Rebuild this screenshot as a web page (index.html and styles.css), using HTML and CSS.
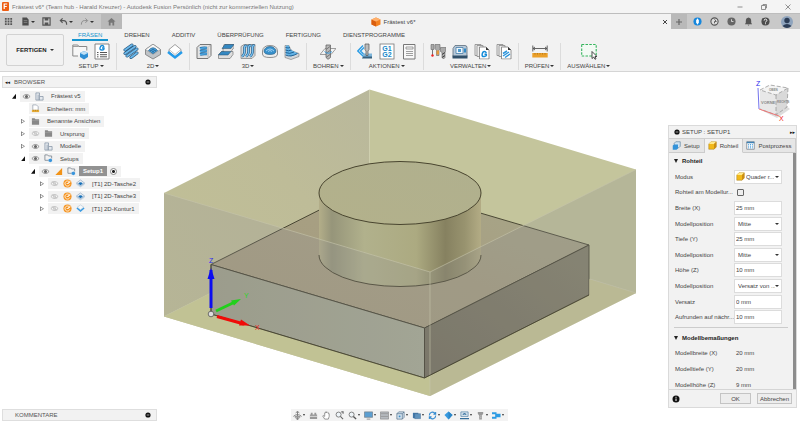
FILE: index.html
```html
<!DOCTYPE html>
<html lang="de">
<head>
    <meta charset="UTF-8">
    <meta name="viewport" content="width=device-width, initial-scale=1.0">
    <title>Frästest v6* - Autodesk Fusion</title>
    <link rel="stylesheet" href="styles.css">
</head>
<body>
    <!-- Shared icons -->
    <svg class="sprite" aria-hidden="true">
        <symbol id="eye" viewBox="0 0 10 8"><path d="M1 4Q5 -.5 9 4Q5 8.500 1 4Z" fill="#fff" stroke="#777" stroke-width=".9"/><circle cx="5" cy="4" r="1.700" fill="#666"/></symbol>
        <symbol id="eye-off" viewBox="0 0 10 8"><path d="M1 4Q5 -.5 9 4Q5 8.500 1 4Z" fill="#fff" stroke="#aaa" stroke-width=".8"/><circle cx="5" cy="4" r="1.300" fill="none" stroke="#aaa" stroke-width=".7"/><path d="M2 2l6 4" stroke="#aaa" stroke-width=".6"/></symbol>
        <symbol id="component" viewBox="0 0 10 10"><path d="M1 1h4v4h4v4H1z" fill="#e5e9ee" stroke="#8291a3" stroke-width=".8"/><path d="M3.500 3v6M5 5v4" stroke="#8291a3" stroke-width=".8"/></symbol>
        <symbol id="folder" viewBox="0 0 10 10"><path d="M1 1.500h3l1 1h4v6H1z" fill="#888"/><path d="M1 3.800h8" stroke="#aaa" stroke-width=".5"/></symbol>
        <symbol id="units" viewBox="0 0 10 10"><path d="M2 1h4l2 2v4H2z" fill="#fff" stroke="#8793a2" stroke-width=".7"/><path d="M1 6.500h8V9H1z" fill="#e8ad37"/><path d="M3 6.500V8M5 6.500V8M7 6.500V8" stroke="#8c6416" stroke-width=".5"/></symbol>
        <symbol id="setup-small" viewBox="0 0 10 10"><path d="M1 1h3l1 1.200h3.500V5M1 1v6h4" fill="none" stroke="#7b8490" stroke-width=".9"/><path d="M5 6l2-1 2 1v2L7 9.300 5 8z" fill="#3995dc"/></symbol>
        <symbol id="triangle" viewBox="0 0 10 10"><path d="M9 1v8H1.500z" fill="#f29317"/></symbol>
        <symbol id="cycle" viewBox="0 0 10 10"><circle cx="5" cy="5" r="4.500" fill="#f5931e"/><path d="M7.300 3.500A2.800 2.800 0 1 0 7.600 6M7.700 1.800v2H5.500M4 5h2.500" fill="none" stroke="#fff" stroke-width=".9"/></symbol>
        <symbol id="pocket-small" viewBox="0 0 10 10"><path d="M5 1l4.500 3.500v2L5 9.500.5 6.500v-2z" fill="#c9d8e5"/><path d="M5 1l4.500 3.500L5 7.500.5 4.500z" fill="#e9edf1" stroke="#6a8db0" stroke-width=".5"/><path d="M2.500 5Q5 2 7.500 5L5 7z" fill="#1770b8"/></symbol>
        <symbol id="contour-small" viewBox="0 0 10 10"><path d="M.5 5L5 9l4.500-4-1-1.500L5 6.500 1.500 3.500z" fill="#3a9be3"/><path d="M5 1l3.500 2.500L5 6.300 1.500 3.500z" fill="#f6f9fb" stroke="#9db6cc" stroke-width=".5"/></symbol>
        <symbol id="dot" viewBox="0 0 6 6"><circle cx="3" cy="3" r="2.600" fill="#111"/><path d="M1.700 3h2.600" stroke="#fff" stroke-width=".6"/></symbol>
        <symbol id="cube-yellow" viewBox="0 0 12 12"><path d="M1 4l3-3h7v7l-3 3H1z" fill="#f2b919" stroke="#9c7419" stroke-width=".6"/><path d="M1 4l3-3h7L8 4z" fill="#ffe98d"/><path d="M8 4l3-3v7l-3 3z" fill="#c98d14"/></symbol>
        <symbol id="pages" viewBox="0 0 16 16"><path d="M1 1h6v11H1z" fill="#eee" stroke="#888" stroke-width=".8"/><path d="M3 2h6v11H3z" fill="#eee" stroke="#888" stroke-width=".8"/><path d="M5.500 3.500H12l3 3v9H5.500z" fill="#fff" stroke="#777" stroke-width=".8"/><path d="M12 3.500v3h3z" fill="#333"/></symbol>
    </svg>

    <header class="title-bar">
        <svg class="logo" viewBox="0 0 8 10"><rect width="7" height="9" rx="1" fill="#ed5d13"/><path d="M2.200 7V2h3M2.200 4.500h2.600" fill="none" stroke="#fff" stroke-width="1.200"/></svg>
        <span class="window-title">Frästest v6* (Team hub - Harald Kreuzer) - Autodesk Fusion Persönlich (nicht zur kommerziellen Nutzung)</span>
        <div class="window-controls">
            <button aria-label="Minimieren"><svg viewBox="0 0 8 8"><path d="M1.500 4h5"/></svg></button>
            <button aria-label="Verkleinern"><svg viewBox="0 0 8 8"><path d="M1.500 2.500h4v4h-4zM3 2.500v-1h3.500V5h-1"/></svg></button>
            <button aria-label="Schließen"><svg viewBox="0 0 8 8"><path d="M1.500 1.500l5 5M6.500 1.500l-5 5"/></svg></button>
        </div>
    </header>

    <div class="tab-bar">
        <div class="quick-access">
            <button aria-label="Datengruppe"><svg viewBox="0 0 10 10"><path d="M1 1h2v2H1zM4 1h2v2H4zM7 1h2v2H7zM1 4h2v2H1zM4 4h2v2H4zM7 4h2v2H7zM1 7h2v2H1zM4 7h2v2H4zM7 7h2v2H7z" fill="#555"/></svg></button>
            <button class="caret" aria-label="Datei"><svg viewBox="0 0 10 10"><path d="M1.500 .5h5L8.500 3v6.500h-7z" fill="#4d4d4d"/><path d="M3 4h4M3 6h4" stroke="#aaa" stroke-width=".6"/></svg></button>
            <button aria-label="Speichern"><svg viewBox="0 0 10 10"><path d="M1 1h8v8H1z" fill="none" stroke="#555" stroke-width="1.300"/><path d="M3 1h4v3H3zM3 6h4v3H3z" fill="#555"/></svg></button>
            <button class="caret" aria-label="Rückgängig"><svg viewBox="0 0 10 10"><path d="M4 1.500L1.500 4 4 6.500M2 4h3q3.500 0 3.500 4.500" fill="none" stroke="#555" stroke-width="1.300"/></svg></button>
            <button class="caret muted" aria-label="Wiederherstellen"><svg viewBox="0 0 10 10"><path d="M6 1.500L8.500 4 6 6.500M8 4H5Q1.500 4 1.500 8.500" fill="none" stroke="#888" stroke-width="1"/></svg></button>
        </div>
        <button class="home" aria-label="Start"><svg viewBox="0 0 10 10"><path d="M5 1l4.500 4H8v4.500H6V6.500H4v3H2V5H.5z" fill="#777"/></svg></button>
        <div class="document-tab">
            <svg class="doc-icon" viewBox="0 0 10 10"><path d="M5 .5l4.500 2v5L5 9.500.5 7.500v-5z" fill="#f58220"/><path d="M.5 2.500L5 4.500v5l-4.500-2z" fill="#d95e0f"/><path d="M5 .5l4.500 2L5 4.500.5 2.500z" fill="#ffb06c"/></svg>
            <span>Frästest v6*</span>
            <button class="close-tab" aria-label="Tab schließen"><svg viewBox="0 0 8 8"><path d="M2 2l4 4M6 2L2 6" stroke="#333" stroke-width=".9"/></svg></button>
        </div>
        <button class="new-tab" aria-label="Neuer Tab"><svg viewBox="0 0 10 10"><path d="M5 2v6M2 5h6" stroke="#666" stroke-width="1.200"/></svg></button>
        <div class="account">
            <button aria-label="Erweiterungen"><svg viewBox="0 0 10 10"><circle cx="5" cy="5" r="4.500" fill="#1687dd"/><path d="M5 1.500l1.500 2v2.500L5 8.500 3.500 6V3.500z" fill="#fff"/></svg></button>
            <button aria-label="Offline"><svg viewBox="0 0 10 10"><circle cx="5" cy="5" r="4" fill="#ddd" stroke="#555" stroke-width="1.200"/><path d="M5 2.500L7 5H5v2" fill="none" stroke="#555" stroke-width="1"/></svg></button>
            <button aria-label="Auftragsstatus"><svg viewBox="0 0 10 10"><circle cx="5" cy="5" r="4.500" fill="#666"/><path d="M5 2.500V5h2.200" fill="none" stroke="#ddd" stroke-width="1"/></svg></button>
            <button aria-label="Benachrichtigungen"><svg viewBox="0 0 10 10"><path d="M5 .5q3 .5 3 4v2L9 8H1l1-1.500v-2q0-3.500 3-4zM4 8.500h2L5 9.700z" fill="#555"/></svg></button>
            <button aria-label="Hilfe"><svg viewBox="0 0 10 10"><circle cx="5" cy="5" r="4.500" fill="#4d4d4d"/><path d="M3.500 4q0-1.700 1.500-1.700T6.500 4Q6.500 4.800 5 5.500v.6M5 7v1" fill="none" stroke="#fff" stroke-width="1"/></svg></button>
            <button class="avatar" aria-label="Konto"><svg viewBox="0 0 12 12"><circle cx="6" cy="6" r="6" fill="#8fa4bd"/><circle cx="6" cy="4.500" r="2.700" fill="#2c3d56"/><path d="M1.500 10Q6 6 10.500 10Q6 14 1.500 10Z" fill="#2c3d56"/></svg></button>
        </div>
    </div>

    <nav class="ribbon">
        <button class="workspace">FERTIGEN <span class="arrow"></span></button>
        <div class="ribbon-main">
            <div class="ribbon-tabs">
                <a class="active" href="#">FRÄSEN</a>
                <a href="#">DREHEN</a>
                <a href="#">ADDITIV</a>
                <a href="#">ÜBERPRÜFUNG</a>
                <a href="#">FERTIGUNG</a>
                <a href="#">DIENSTPROGRAMME</a>
            </div>
            <div class="ribbon-groups">
                <div class="group">
                    <div class="tools">
                        <button aria-label="Neues Setup"><svg viewBox="0 0 16 16"><path d="M6 12.500H.8V1.500h5l1 1.500h8V7" fill="#f7f7f7" stroke="#888" stroke-width="1"/><path d="M1 3h5.500" stroke="#888" stroke-width=".8"/><path d="M8 9.500l4-2 4 2v4l-4 2.500-4-2.500z" fill="#2e8ed4"/><path d="M8 9.500l4-2 4 2-4 2z" fill="#bfe0f6"/></svg></button>
                        <button aria-label="NC-Programm"><svg viewBox="0 0 16 16"><path d="M1 .5h14v15H1z" fill="#fff" stroke="#777" stroke-width=".9"/><path d="M10 3.500Q9.500 2 8 2T6 4.300 8 6.500t2-2H8" fill="none" stroke="#148bd8" stroke-width="1.300"/><path d="M3 9h1.500M3 11.200h1.500M3 13.300h1.500M6 9h7M6 11.200h7M6 13.300h7" stroke="#555" stroke-width="1"/></svg></button>
                    </div>
                    <button class="group-label">SETUP</button>
                </div>
                <div class="group">
                    <div class="tools">
                        <button aria-label="2D adaptiv"><svg viewBox="0 0 16 16"><g stroke-linecap="round"><path d="M2 6.500l7-5M2 10l10-7M4 12.500l10-7M8 14l6-4.500" stroke="#29577c" stroke-width="3"/><path d="M2 6.500l7-5M2 10l10-7M4 12.500l10-7M8 14l6-4.500" stroke="#6bb9ec" stroke-width="1.700"/></g></svg></button>
                        <button aria-label="2D-Tasche"><svg viewBox="0 0 16 16"><path d="M8 .7L15.500 6v5L8 15.500.5 11V6z" fill="#bfc3c7" stroke="#777" stroke-width=".8"/><path d="M8 .7L15.500 6 8 11 .5 6z" fill="#f6f6f6" stroke="#888" stroke-width=".6"/><path d="M3.500 7Q8 1.500 12.500 7L8 10.200z" fill="#49a3de" stroke="#195a8a" stroke-width=".7"/><path d="M5 7.500q3-3 6 0M7 8.500q1-1 2 0" fill="none" stroke="#164d7c" stroke-width=".7"/></svg></button>
                        <button aria-label="2D-Kontur"><svg viewBox="0 0 16 16"><path d="M8 1l6 5v2l-6 5-6-5V6z" fill="#fff" stroke="#888" stroke-width=".8"/><path d="M1 8.500l7 5.500 7-5.500" fill="none" stroke="#249bea" stroke-width="2.400"/><path d="M2 6l6 5 6-5" fill="none" stroke="#999" stroke-width=".6"/></svg></button>
                    </div>
                    <button class="group-label">2D</button>
                </div>
                <div class="group">
                    <div class="tools">
                        <button aria-label="Adaptives Schruppen"><svg viewBox="0 0 16 16"><path d="M1 4l3-3h11v11l-3 3H1z" fill="#e3e3e3" stroke="#777"/><path d="M12 4v10M12 4l3-3" stroke="#999" stroke-width=".6"/><path d="M4 5q3-1 7-.5M4 8q3-1 7-.5M4 11q3-1 7-.5" fill="none" stroke="#206ca5" stroke-width="2.600"/><path d="M4 5q3-1 7-.5M4 8q3-1 7-.5M4 11q3-1 7-.5" fill="none" stroke="#58b4ee" stroke-width="1.200"/></svg></button>
                        <button aria-label="Taschenräumen"><svg viewBox="0 0 16 16"><path d="M6 1h10v3l-3 4h2v3l-3 4H.5v-4l3-3H6l-1-1V5z" fill="#dedede" stroke="#777" stroke-width=".7"/><path d="M7 1h9l-3 4H4zM3.500 8H13l-3 3.500H.5z" fill="#3488c2" stroke="#264f6d" stroke-width=".5"/></svg></button>
                        <button aria-label="Parallel"><svg viewBox="0 0 16 16"><path d="M1 3l3-2h11v11l-3 3H1z" fill="#d8d8d8" stroke="#888" stroke-width=".8"/><path d="M2 13Q5 11 4.500 6T7 3M6 13Q9 11 8.500 6T11 2.500M10 13q3-2 2.500-7T14.500 2.500" fill="none" stroke="#24618f" stroke-width="2.600"/><path d="M2 13Q5 11 4.500 6T7 3M6 13Q9 11 8.500 6T11 2.500M10 13q3-2 2.500-7T14.500 2.500" fill="none" stroke="#7dc5f4" stroke-width="1.200"/></svg></button>
                        <button aria-label="Kontur 3D"><svg viewBox="0 0 16 16"><path d="M.5 7.500Q1 2 8 2t7.500 5.500v3q0 3.500-7.500 3.500T.5 10.500z" fill="#eee" stroke="#777" stroke-width=".8"/><path d="M2 7.500Q3 3 8 3t6 4.500Q14 11 8 11T2 7.500z" fill="#3790cb" stroke="#245b82" stroke-width=".6"/><path d="M4 7.500q4-4 8 0M6 8q2-2 4 0" fill="none" stroke="#a6d6f6" stroke-width=".9"/></svg></button>
                        <button aria-label="Rampe"><svg viewBox="0 0 16 16"><path d="M1 12V2h4l2 5 8 3v3l-8 3-6-2z" fill="#d2d6da" stroke="#777" stroke-width=".6"/><path d="M2 2h3l1 4 8 4-7 3-5-2z" fill="#62b3e6"/><path d="M1.500 4q3 1 4.500 0M1.500 6.500q3 1.500 6 0M1.500 9q4 2 8.500-.5M1.500 11.500q5 2.500 12-1.500" fill="none" stroke="#226396" stroke-width="1"/></svg></button>
                    </div>
                    <button class="group-label">3D</button>
                </div>
                <div class="group">
                    <div class="tools">
                        <button aria-label="Bohren"><svg viewBox="0 0 16 16"><path d="M0 11l5-6h11l-5 6z" fill="#f4f4f4" stroke="#888" stroke-width=".8"/><path d="M6 1.500h4.500V14L8 15.800 6 14z" fill="#b9b9b9" stroke="#666" stroke-width=".8"/><path d="M6 6l4-3M6 10l4-3M6 14l4-3" stroke="#777"/><path d="M4.500 8q3.500 3.500 7.500 0" fill="none" stroke="#339adf" stroke-width=".9"/></svg></button>
                    </div>
                    <button class="group-label">BOHREN</button>
                </div>
                <div class="group">
                    <div class="tools">
                        <button aria-label="Simulieren"><svg viewBox="0 0 16 16"><path d="M6 2L.8 7.500 7 13.500M7 4L3.500 7.500 7 11" fill="none" stroke="#2c9de5" stroke-width="1.400"/><path d="M7 11h8v4H5z" fill="#35607f"/><path d="M6 10h9v3H6z" fill="#7db5da"/><path d="M8 .5h4V6l-1 1.500v4.500H9V7.500L8 6z" fill="#bcbcbc" stroke="#555" stroke-width=".7"/></svg></button>
                        <button aria-label="Postprozess"><svg viewBox="0 0 16 16"><rect x="1" y=".5" width="14" height="15" fill="#fff" stroke="#777" stroke-width=".8"/><text x="8" y="7" class="code">G1</text><text x="8" y="13.500" class="code">G2</text></svg></button>
                        <button aria-label="Einrichtungsblatt"><svg viewBox="0 0 16 16"><path d="M2.500 1h11.500v14.500H2.500z" fill="#f8f8f8" stroke="#777"/><path d="M5 3.500h7v2H5zM5 8h7M5 10h7M5 12h7" fill="none" stroke="#888" stroke-width=".8"/></svg></button>
                    </div>
                    <button class="group-label">AKTIONEN</button>
                </div>
                <div class="group">
                    <div class="tools">
                        <button aria-label="Werkzeugbibliothek"><svg viewBox="0 0 16 16"><path d="M1 1h3v5H1zM5 1h5v4l-1 2v5H6.500V7L5 5zM10.500 4H16v4l-1 1v5l-1.500 1.500L12 14V9l-1.500-1z" fill="#aaa" stroke="#666" stroke-width=".6"/><path d="M2.500 6v6" stroke="#777"/><circle cx="2.500" cy="12" r="1.200" fill="#e22"/><path d="M6.500 7H9v4H6.500z" fill="#e4993d"/><path d="M12 11l3-2M12 14l3-2" stroke="#444"/></svg></button>
                        <button aria-label="Maschinenbibliothek"><svg viewBox="0 0 16 16"><path d="M1 13V5l2-3h10q2 0 2 2v9z" fill="#b7c9d9" stroke="#5c6d7c" stroke-width=".8"/><path d="M.5 12h15v3H.5z" fill="#31506a"/><path d="M4 4h7v6H4z" fill="#eef6fb" stroke="#477da8" stroke-width=".8"/><path d="M6 5.500h3v3H6z" fill="#4b9ad0"/><path d="M12 5h2v4h-2z" fill="#338bc7"/></svg></button>
                        <button aria-label="Postprozessorbibliothek"><svg viewBox="0 0 16 16"><use href="#pages"/><path d="M12.300 9.500Q11.800 8 10.300 8T8.200 10.700 10.300 13t2-2.200h-1.800" fill="none" stroke="#148bd8" stroke-width="1.500"/></svg></button>
                        <button aria-label="Vorlagenbibliothek"><svg viewBox="0 0 16 16"><use href="#pages"/><path d="M7 10l4-2.500M7 12.500l6-4M9 14l5-3.500" stroke="#2d95dc" stroke-width="1.500"/></svg></button>
                    </div>
                    <button class="group-label">VERWALTEN</button>
                </div>
                <div class="group">
                    <div class="tools">
                        <button aria-label="Messen"><svg viewBox="0 0 16 16"><path d="M.8 2v6M15.200 2v6M1 5h14M3 3.500L1 5l2 1.500M13 3.500L15 5l-2 1.500" fill="none" stroke="#555" stroke-width=".9"/><path d="M.3 9.500h15.400v4.500H.3z" fill="#eba02a"/><path d="M3 9.500v1.500M5.500 9.500v1.500M8 9.500v1.500M10.500 9.500v1.500M13 9.500v1.500" stroke="#9a6412" stroke-width=".6"/></svg></button>
                    </div>
                    <button class="group-label">PRÜFEN</button>
                </div>
                <div class="group">
                    <div class="tools">
                        <button aria-label="Auswählen"><svg viewBox="0 0 16 16"><rect x=".7" y="1" width="14.500" height="11.500" fill="#f3faf4" stroke="#35b55d" stroke-width="1.100" stroke-dasharray="2.500 1.300"/><path d="M11 8v7l1.800-1.500 1.200 2.300 1-.6-1-2.200h2z" fill="#fff" stroke="#222" stroke-width=".8"/></svg></button>
                    </div>
                    <button class="group-label">AUSWÄHLEN</button>
                </div>
            </div>
        </div>
    </nav>

    <main class="workspace-area">
        <!-- 3D scene: stock box, plate with cylinder, origin triad -->
        <svg class="scene" viewBox="0 72 800 353" role="img" aria-label="Modell im Rohteil">
            <defs>
                <linearGradient id="backLeft" x1="0" y1="1" x2="1" y2="0"><stop offset="0" stop-color="#c1c096"/><stop offset=".6" stop-color="#bebc98"/><stop offset="1" stop-color="#b9b89c"/></linearGradient>
                <linearGradient id="plateTop" x1="0" y1="1" x2="1" y2="0"><stop offset="0" stop-color="#a59b7d"/><stop offset=".5" stop-color="#a79f82"/><stop offset="1" stop-color="#a7a78a"/></linearGradient>
                <linearGradient id="plateFront" x1="0" y1="0" x2="1" y2="0"><stop offset="0" stop-color="#9fa089"/><stop offset="1" stop-color="#a7ab95"/></linearGradient>
                <linearGradient id="plateSide" x1="0" y1="1" x2="1" y2="0"><stop offset="0" stop-color="#736e5c"/><stop offset="1" stop-color="#838069"/></linearGradient>
                <linearGradient id="cylinder" x1="0" y1="0" x2="1" y2="0"><stop offset="0" stop-color="#b3ae89"/><stop offset=".08" stop-color="#96957a"/><stop offset=".28" stop-color="#b1b18c"/><stop offset=".6" stop-color="#acaa81"/><stop offset=".78" stop-color="#868160"/><stop offset=".9" stop-color="#98936f"/><stop offset="1" stop-color="#b3ac85"/></linearGradient>
                <linearGradient id="cap" x1="0" y1="1" x2="1" y2="0"><stop offset="0" stop-color="#b3b18b"/><stop offset="1" stop-color="#b0b08e"/></linearGradient>
            </defs>
            <path d="M164 316.500L370 213l266 80-206 103z" fill="#c4c497"/>
            <path d="M164 193L369.500 89.500V213L164 316.500z" fill="url(#backLeft)"/>
            <path d="M369.500 89.500L636 169.500V293L369.500 213z" fill="#c4c59c"/>
            <path d="M369.500 90v123" stroke="#cfcfaf"/>
            <path d="M164 316.500l53-26.500M570 273l66 20" stroke="#cdcdac"/>
            <g stroke="#3e3c2a" stroke-width=".9" stroke-linejoin="round">
                <path d="M211 264.500L375 182l214 63-164.500 83z" fill="url(#plateTop)"/>
                <path d="M211 264.500L424.500 328v50L211 314z" fill="url(#plateFront)"/>
                <path d="M424.500 328L589 245v50l-164.500 83z" fill="url(#plateSide)"/>
            </g>
            <path d="M319 193v62a81 31.500 0 0 0 162 0v-62z" fill="url(#cylinder)"/>
            <path d="M319 255a81 31.500 0 0 0 162 0" fill="none" stroke="#49452f"/>
            <ellipse cx="400" cy="193" rx="81" ry="31.500" fill="url(#cap)" stroke="#49452f"/>
            <path d="M164 193l266 79v124l-266-79.500z" fill="#949496" fill-opacity=".24"/>
            <path d="M430 272l206-102.500V293L430 396z" fill="#8f8e90" fill-opacity=".28"/>
            <path d="M164 316.500l46-23.500v21l214.500 64 5.500-2.500V396z" fill="#c5c693" fill-opacity=".7"/>
            <path d="M430 375.500L589 295v-16l47 14-206 103z" fill="#bebd94" fill-opacity=".6"/>
            <path d="M164 193l266 79 206-102.500M430 272v124" fill="none" stroke="#c7c5ac" stroke-opacity=".6"/>
            <path d="M211 264.500V314l213.500 64L589 295" fill="none" stroke="#45422d" stroke-width=".8"/>
            <path d="M211 308v-38" stroke="#0c0cf0" stroke-width="3"/><path d="M211 268l-3.500 11h7z" fill="#0c0cf0"/>
            <path d="M216 311l20-9.500" stroke="#22d01c" stroke-width="3"/><path d="M241 299l-10 1.500 3 5z" fill="#22d01c"/>
            <path d="M217 316.500l27 7.500" stroke="#f00b08" stroke-width="3"/><path d="M250 325.500l-9-6-2 6z" fill="#f00b08"/>
            <circle cx="211" cy="314" r="2.800" fill="#ddd" stroke="#555" stroke-width=".8"/>
            <text x="209" y="263" class="axis axis-z">Z</text>
            <text x="244" y="298" class="axis axis-y">Y</text>
            <text x="255" y="330" class="axis axis-x">X</text>
        </svg>

        <section class="browser">
            <div class="panel-bar"><span class="collapse">◂◂</span><span>BROWSER</span><svg viewBox="0 0 6 6"><use href="#dot"/></svg></div>
            <ul class="tree">
                <li><i class="twist open"></i><div class="node"><svg><use href="#eye"/></svg><svg><use href="#component"/></svg><span>Frästest v5</span></div></li>
                <li class="level-1"><i class="twist none"></i><div class="node"><svg><use href="#units"/></svg><span>Einheiten: mm</span></div></li>
                <li class="level-1"><i class="twist"></i><div class="node"><svg><use href="#folder"/></svg><span>Benannte Ansichten</span></div></li>
                <li class="level-1"><i class="twist"></i><div class="node"><svg><use href="#eye-off"/></svg><svg><use href="#folder"/></svg><span>Ursprung</span></div></li>
                <li class="level-1"><i class="twist"></i><div class="node"><svg><use href="#eye"/></svg><svg><use href="#component"/></svg><span>Modelle</span></div></li>
                <li class="level-1"><i class="twist open"></i><div class="node"><svg><use href="#eye"/></svg><svg><use href="#setup-small"/></svg><span>Setups</span></div></li>
                <li class="level-2"><i class="twist open"></i><div class="node"><svg><use href="#eye"/></svg><svg><use href="#triangle"/></svg><svg><use href="#setup-small"/></svg><span class="selected">Setup1</span><input type="radio" checked aria-label="Setup1 aktiv"></div></li>
                <li class="level-3"><i class="twist"></i><div class="node"><svg><use href="#eye-off"/></svg><svg><use href="#cycle"/></svg><svg><use href="#pocket-small"/></svg><span>[T1] 2D-Tasche2</span></div></li>
                <li class="level-3"><i class="twist"></i><div class="node"><svg><use href="#eye-off"/></svg><svg><use href="#cycle"/></svg><svg><use href="#pocket-small"/></svg><span>[T1] 2D-Tasche3</span></div></li>
                <li class="level-3"><i class="twist"></i><div class="node"><svg><use href="#eye-off"/></svg><svg><use href="#cycle"/></svg><svg><use href="#contour-small"/></svg><span>[T1] 2D-Kontur1</span></div></li>
            </ul>
        </section>

        <div class="panel-bar comments"><span>KOMMENTARE</span><svg viewBox="0 0 6 6"><use href="#dot"/></svg></div>

        <div class="nav-bar">
            <button class="caret" aria-label="Orbit"><svg viewBox="0 0 10 10"><path d="M5 .5v9M.5 6q4.500-4 9 0M3 2l2-1.500L7 2M3 8l2 1.500L7 8" fill="none" stroke="#777"/><path d="M2 6.500h6" stroke="#999" stroke-width="2"/></svg></button>
            <button aria-label="Ansehen"><svg viewBox="0 0 10 10"><path d="M1 4h8v5H1zM2 2h2v2H2zM6 2h2v2H6z" fill="#999"/><path d="M1 6h8" stroke="#ddd"/></svg></button>
            <button aria-label="Pan"><svg viewBox="0 0 10 10"><path d="M3 9L.8 5.500l1-.5L3 6V2h1V1h1v1l1-1 1 1v1h1v3L7 9z" fill="#fff" stroke="#777" stroke-width=".8"/></svg></button>
            <button aria-label="Zoom"><svg viewBox="0 0 10 10"><circle cx="4" cy="4" r="2.800" fill="#eef4f8" stroke="#777"/><path d="M6 6l3 3M7 1h2v2" fill="none" stroke="#666" stroke-width="1.200"/></svg></button>
            <button class="caret" aria-label="Einpassen"><svg viewBox="0 0 10 10"><circle cx="4" cy="4" r="2.800" fill="#eef4f8" stroke="#777"/><path d="M6 6l3 3" stroke="#555" stroke-width="1.500"/></svg></button>
            <button class="caret" aria-label="Anzeige"><svg viewBox="0 0 10 10"><path d="M.5 1h9v6h-9z" fill="#5c9fd1" stroke="#76818c" stroke-width=".8"/><path d="M3 9h4" stroke="#888"/></svg></button>
            <button class="caret" aria-label="Raster"><svg viewBox="0 0 10 10"><path d="M.5 1h9v8h-9z" fill="#b7bbc0" stroke="#777" stroke-width=".6"/><path d="M1 3h8M1 6h8" stroke="#888" stroke-width=".7"/></svg></button>
            <button class="caret" aria-label="Darstellung"><svg viewBox="0 0 10 10"><path d="M1 3l2-2h6v6L7 9H1zM1 3h6v6M7 3l2-2" fill="#dce9f3" stroke="#54718c" stroke-width=".8"/><path d="M3 5h2v2H3z" fill="#3c8ac2"/></svg></button>
            <button class="caret" aria-label="Ansichten"><svg viewBox="0 0 10 10"><path d="M1 2h6v6H1z" fill="#3f76a8"/><path d="M3 3h6.500v5.500H3z" fill="#5f93bd" stroke="#446a8c" stroke-width=".5"/></svg></button>
            <button class="caret" aria-label="Aktualisieren"><svg viewBox="0 0 10 10"><path d="M1.500 5A3.500 3.500 0 0 1 8 3M8.500 5A3.500 3.500 0 0 1 2 7M8.500 1v2.500H6M1.500 9V6.500H4" fill="none" stroke="#348bd0" stroke-width="1.200"/></svg></button>
            <button class="caret" aria-label="Rohteil"><svg viewBox="0 0 10 10"><path d="M5 .5l4.500 4-4.500 5-4.500-5z" fill="#389ae0"/><path d="M5 .5v9l4.500-5z" fill="#2d86c6"/></svg></button>
            <button class="caret" aria-label="Maschine"><svg viewBox="0 0 10 10"><path d="M1 1h8v5H1z" fill="#dce8f1" stroke="#5281a4" stroke-width=".8"/><path d="M3 4l2-1 2 1M0 8.500h10" fill="none" stroke="#356f9c" stroke-width="1.300"/></svg></button>
            <button class="caret" aria-label="Werkzeug"><svg viewBox="0 0 10 10"><path d="M2 1h6v2L6.500 5v4.500h-3V5L2 3z" fill="#999"/><path d="M4 6l2-1M4 8l2-1" stroke="#ddd" stroke-width=".6"/></svg></button>
            <button class="caret" aria-label="Werkzeugweg"><svg viewBox="0 0 10 10"><path d="M0 1.500h5v1.500h4.500v4H5v1.500H0v-2h3.500v-3H0z" fill="#2c9be3"/></svg></button>
        </div>

        <svg class="view-cube" viewBox="0 0 44 44" role="img" aria-label="ViewCube">
            <path d="M8 31l16 8 13-9-5-4z" fill="#bbb" opacity=".5"/>
            <path d="M7 11l10-5 18 3-12 7z" fill="#f4f4f4"/><path d="M7 11l16 5v20L7 30z" fill="#e8e8e8"/><path d="M23 16l12-7-1 19-11 8z" fill="#d9d9d9"/>
            <path d="M7 11l10-5 18 3-12 7zM23 16v20M35 9l-1 19-11 8-16-6" fill="none" stroke="#999" stroke-width=".8" stroke-dasharray="4 2"/>
            <path d="M6 30L5 9" stroke="#7474ed"/><path d="M6 30l20 7" stroke="#ef7777"/>
            <text x="8" y="25" class="cube-text">VORNE</text>
            <text x="24" y="24" class="cube-text side">RECHTS</text>
            <text x="16" y="12" class="cube-text side">OBEN</text>
            <text x="3" y="7" class="axis axis-z">Z</text><text x="26" y="42" class="axis axis-x">X</text>
        </svg>

        <form class="setup-dialog">
            <div class="dialog-title"><svg viewBox="0 0 6 6"><use href="#dot"/></svg><span>SETUP : SETUP1</span><span class="collapse">▸▸</span></div>
            <div class="dialog-tabs">
                <button type="button"><svg viewBox="0 0 12 12"><path d="M3 3l2-2h6v6L9 9H3z" fill="#cfe3f3" stroke="#4e7696" stroke-width=".8"/><path d="M1 6l2-1.500h5V10l-2 1.500H1z" fill="#3292d9"/></svg>Setup</button>
                <button type="button" class="active"><svg viewBox="0 0 12 12"><use href="#cube-yellow"/></svg>Rohteil</button>
                <button type="button"><svg viewBox="0 0 12 12"><path d="M1 1h10v10H1z" fill="#fff" stroke="#56626d" stroke-width=".8"/><path d="M1 2h10" stroke="#3e81b6" stroke-width="2"/><path d="M3.500 4v6M6 4v6M8.500 4v6" stroke="#429adb" stroke-width="1.200" stroke-dasharray="1.500 .7"/></svg>Postprozess</button>
            </div>
            <div class="dialog-body">
                <h2>Rohteil</h2>
                <div class="fields">
                    <div class="field"><label for="mode">Modus</label><div class="select with-icon"><svg viewBox="0 0 12 12"><use href="#cube-yellow"/></svg><select id="mode"><option>Quader r...</option></select></div></div>
                    <div class="field"><label for="origin">Rohteil am Modellur...</label><input type="checkbox" id="origin"></div>
                    <div class="field"><label for="width">Breite (X)</label><input type="text" id="width" value="25 mm"></div>
                    <div class="field"><label for="posX">Modellposition</label><div class="select"><select id="posX"><option>Mitte</option></select></div></div>
                    <div class="field"><label for="depth">Tiefe (Y)</label><input type="text" id="depth" value="25 mm"></div>
                    <div class="field"><label for="posY">Modellposition</label><div class="select"><select id="posY"><option>Mitte</option></select></div></div>
                    <div class="field"><label for="height">Höhe (Z)</label><input type="text" id="height" value="10 mm"></div>
                    <div class="field"><label for="posZ">Modellposition</label><div class="select"><select id="posZ"><option>Versatz von ...</option></select></div></div>
                    <div class="field"><label for="offset">Versatz</label><input type="text" id="offset" value="0 mm"></div>
                    <div class="field"><label for="round">Aufrunden auf nächr...</label><input type="text" id="round" value="10 mm"></div>
                </div>
                <h2 class="divided">Modellbemaßungen</h2>
                <dl class="dimensions">
                    <dt>Modellbreite (X)</dt><dd>20 mm</dd>
                    <dt>Modelltiefe (Y)</dt><dd>20 mm</dd>
                    <dt>Modellhöhe (Z)</dt><dd>9 mm</dd>
                </dl>
            </div>
            <div class="dialog-footer">
                <svg viewBox="0 0 8 8"><circle cx="4" cy="4" r="3.500" fill="#111"/><path d="M4 3.500V6M4 1.800v1" stroke="#fff"/></svg>
                <button type="button" class="push">OK</button>
                <button type="button" class="push">Abbrechen</button>
            </div>
        </form>
    </main>
</body>
</html>
```

FILE: styles.css
```css
* {
    box-sizing: border-box;
}

body {
    font-family: "Liberation Sans", Arial, sans-serif;
    font-size: 6px;
    line-height: 8px;
    color: #444;
    background-color: #fff;
    margin: 0;
    min-height: 100vh;
    display: flex;
    flex-direction: column;
}

button {
    font: inherit;
    color: inherit;
    background: none;
    border: none;
    padding: 0;
    cursor: pointer;
    display: flex;
    align-items: center;
    white-space: nowrap;
}

svg {
    display: block;
    flex: none;
}

.sprite {
    position: absolute;
    width: 0;
    height: 0;
}

/* Title bar */
.title-bar {
    display: flex;
    align-items: center;
    height: 13px;
    padding: 0 8px 0 2px;
    gap: 2px;
    background-color: #f4f4f4;
}

.logo {
    width: 8px;
    height: 10px;
}

.window-title {
    color: #777;
}

.window-controls {
    display: flex;
    gap: 16px;
    margin-left: auto;
}

.window-controls svg {
    width: 8px;
    height: 8px;
    fill: none;
    stroke: #777;
    stroke-width: 0.8;
}

/* Tab bar */
.tab-bar {
    display: flex;
    height: 16px;
    border-top: 1px solid #bdbdbd;
    background-color: #c9c9c9;
}

.quick-access {
    display: flex;
    align-items: center;
    gap: 8px;
    width: 101px;
    padding-left: 4px;
}

.quick-access svg,
.home svg,
.account svg,
.nav-bar svg {
    width: 9px;
    height: 9px;
}

.caret::after,
.arrow,
.group-label::after,
.select::after {
    content: "";
    border: 2px solid transparent;
    border-top-color: #333;
    border-bottom-width: 0;
    margin-left: 2px;
}

.quick-access .caret::after {
    margin-left: 1px;
}

.quick-access .caret {
    margin-right: -1px;
}

.home {
    width: 21px;
    justify-content: center;
    background-color: #b9b9b9;
}

.document-tab {
    display: flex;
    flex: 1;
    align-items: center;
    justify-content: center;
    gap: 2px;
    padding: 0 2px 0 6px;
    background-color: #f2f2f2;
}

.doc-icon {
    width: 10px;
    height: 10px;
    margin-left: auto;
}

.close-tab {
    margin-left: auto;
}

.close-tab svg {
    width: 8px;
    height: 8px;
}

.new-tab {
    width: 16px;
    justify-content: center;
    background-color: #b9b9b9;
}

.new-tab svg {
    width: 10px;
    height: 10px;
}

.account {
    display: flex;
    align-items: center;
    gap: 8px;
    padding: 0 7px 0 6px;
}

.account .avatar {
    margin-left: 3px;
}

.account .avatar svg {
    width: 12px;
    height: 12px;
}

/* Ribbon */
.ribbon {
    display: flex;
    height: 43px;
    background-color: #f2f2f2;
    border-bottom: 1px solid #d5d5d5;
}

.workspace {
    width: 58px;
    height: 32px;
    margin: 5px 2px 0 6px;
    justify-content: center;
    font-weight: bold;
    color: #222;
    border: 1px solid #d2d2d2;
    border-radius: 2px;
}

.arrow {
    margin-left: 3px;
}

.ribbon-tabs {
    display: flex;
    gap: 10px;
    padding-left: 6px;
}

.ribbon-tabs a {
    padding: 2px 6px 0;
    height: 12px;
    text-decoration: none;
    color: inherit;
    border-bottom: 2px solid transparent;
}

.ribbon-tabs .active {
    color: #1595cf;
    border-bottom-color: #1595cf;
}

.ribbon-groups {
    display: flex;
    padding-top: 2px;
}

.group {
    display: flex;
    flex-direction: column;
    align-items: center;
    padding: 0 6px;
    border-right: 1px solid #dcdcdc;
}

.group:last-child {
    border-right: none;
}

.tools {
    display: flex;
    gap: 6px;
}

.tools svg {
    width: 16px;
    height: 17px;
}

.group-label {
    margin-top: 2px;
}

.group-label::after {
    margin-left: 1px;
}

.code {
    font-size: 7px;
    font-weight: bold;
    fill: #1687c9;
    text-anchor: middle;
}

/* Canvas with the panels over the scene */
.workspace-area {
    flex: 1;
    display: grid;
    grid-template-columns: 155px 1fr 129px;
    grid-template-rows: 53px 1fr 16px;
    padding: 0 3px 0 2px;
}

.scene {
    grid-area: 1 / 1 / -1 / -1;
    width: calc(100% + 5px);
    height: 100%;
    margin-left: -2px;
}

.axis {
    font-size: 7px;
}

.axis-x {
    fill: #ee2020;
}

.axis-y {
    fill: #2cd626;
}

.axis-z {
    fill: #2a2aee;
}

.browser {
    grid-area: 1 / 1 / 3 / 2;
    padding-top: 4px;
}

.panel-bar {
    display: flex;
    align-items: center;
    gap: 4px;
    height: 12px;
    padding: 0 5px 0 2px;
    color: #555;
    background-color: #f2f2f2;
    border: 1px solid #dedede;
}

.panel-bar svg,
.dialog-title svg {
    width: 6px;
    height: 6px;
}

.panel-bar svg {
    margin-left: auto;
}

.collapse {
    font-family: "DejaVu Sans", sans-serif;
    font-size: 5px;
    color: #111;
}

.tree {
    list-style: none;
    margin: 2px 0 0;
    padding: 0;
    height: 125px;
    display: grid;
    grid-template-rows: repeat(10, 1fr);
}

.tree li {
    display: flex;
    align-items: center;
    padding-left: 5px;
}

.tree .level-1 {
    padding-left: 14px;
}

.tree .level-2 {
    padding-left: 24px;
}

.tree .level-3 {
    padding-left: 33px;
}

.twist {
    width: 4px;
    height: 5px;
    margin: 0 4px 0 5px;
    background-color: #777;
    clip-path: polygon(0 0, 100% 50%, 0 100%, 0 0, 20% 25%, 20% 75%, 75% 50%, 20% 25%);
}

.twist.open {
    background-color: #111;
    clip-path: polygon(100% 0, 100% 100%, 0 100%);
}

.twist.none {
    visibility: hidden;
}

.node {
    display: flex;
    align-items: center;
    height: 11px;
    padding-right: 4px;
    background-color: #f2f2f2;
}

.node svg {
    width: 9px;
    height: 9px;
    margin: 0 2px;
}

.node span {
    margin-left: 5px;
}

.node .selected {
    margin-left: 1px;
    padding: 1px 4px;
    color: #fff;
    font-weight: bold;
    background-color: #929292;
}

.node input {
    appearance: none;
    width: 7px;
    height: 7px;
    margin: 0 0 0 3px;
    border: 1px solid #888;
    border-radius: 50%;
    background: radial-gradient(circle, #222 1px, #fff 2px);
}

.comments {
    grid-area: 3 / 1 / 4 / 2;
    padding-left: 12px;
}

.nav-bar {
    grid-area: 3 / 1 / 4 / 4;
    justify-self: center;
    display: flex;
    align-items: center;
    gap: 4px;
    height: 12px;
    padding: 0 4px 0 2px;
    background-color: #f3f3f3;
}

.nav-bar .caret::after {
    border-width: 2px 1px 0;
    margin-left: 1px;
}

.view-cube {
    grid-area: 1 / 3 / 2 / 4;
    justify-self: end;
    width: 44px;
    height: 44px;
    margin-top: 7px;
}

.cube-text {
    font-size: 4px;
    font-weight: bold;
    fill: #888;
}

.cube-text.side {
    font-size: 3px;
}

/* Setup dialog */
.setup-dialog {
    grid-area: 2 / 3 / 3 / 4;
    align-self: start;
    background-color: #f2f2f2;
    border: 1px solid #dadada;
}

.dialog-title {
    display: flex;
    align-items: center;
    gap: 2px;
    height: 12px;
    padding: 0 1px 0 5px;
}

.dialog-title .collapse {
    margin-left: auto;
}

.dialog-tabs {
    display: flex;
    height: 15px;
    border-top: 1px solid #d0d0d0;
}

.dialog-tabs button {
    gap: 3px;
    padding: 0 4px 0 3px;
    background-color: #e6e6e6;
    border-right: 1px solid #ccc;
    border-bottom: 1px solid #ccc;
}

.dialog-tabs button:last-child {
    flex: 1;
}

.dialog-tabs .active {
    background-color: #f2f2f2;
    border-bottom-color: #f2f2f2;
}

.dialog-tabs svg {
    width: 9px;
    height: 9px;
}

.dialog-body {
    height: 236px;
    overflow: hidden;
    border-right: 3px solid #8d8d8d;
}

.setup-dialog h2 {
    font-size: 6px;
    line-height: 8px;
    color: #222;
    margin: 0 5px;
    padding: 4px 0;
}

.setup-dialog h2::before {
    content: "";
    display: inline-block;
    border: 2px solid transparent;
    border-top: 4px solid #222;
    border-bottom: none;
    margin-right: 4px;
}

.setup-dialog .divided {
    margin-top: 2px;
    padding-top: 6px;
    border-top: 1px solid #ccc;
}

.fields {
    display: grid;
    grid-template-rows: repeat(10, 1fr);
    height: 156px;
}

.field {
    display: grid;
    grid-template-columns: 59px 48px;
    align-items: center;
    padding-left: 6px;
    white-space: nowrap;
}

.field input[type="text"],
.select {
    width: 48px;
    height: 14px;
    font: inherit;
    color: inherit;
    background-color: #fff;
    border: 1px solid #dcdcdc;
}

.field input[type="text"] {
    padding: 0 1px;
}

.select {
    display: flex;
    align-items: center;
    padding: 0 2px 0 3px;
}

.select select {
    appearance: none;
    flex: 1;
    min-width: 0;
    font: inherit;
    color: inherit;
    background: none;
    border: none;
    padding: 0;
}

.select::after {
    margin-left: 0;
}

.with-icon {
    gap: 1px;
    padding-left: 1px;
}

.select svg {
    width: 9px;
    height: 9px;
}

.field input[type="checkbox"] {
    appearance: none;
    width: 7px;
    height: 7px;
    margin: 0 3px;
    border: 1px solid #666;
    border-radius: 1px;
    background-color: #eee;
}

.dimensions {
    display: grid;
    grid-template-columns: 61px 1fr;
    row-gap: 8px;
    margin: 0;
    padding: 3px 0 0 6px;
}

.dimensions dd {
    margin: 0;
}

.dialog-footer {
    display: flex;
    align-items: center;
    gap: 6px;
    height: 18px;
    padding: 0 4px 0 3px;
    border-top: 1px solid #d5d5d5;
}

.dialog-footer svg {
    width: 8px;
    height: 8px;
    margin-right: auto;
}

.push {
    min-width: 31px;
    height: 11px;
    padding: 0 2px;
    justify-content: center;
    background-color: #ededed;
    border: 1px solid #c4c4c4;
}
```
